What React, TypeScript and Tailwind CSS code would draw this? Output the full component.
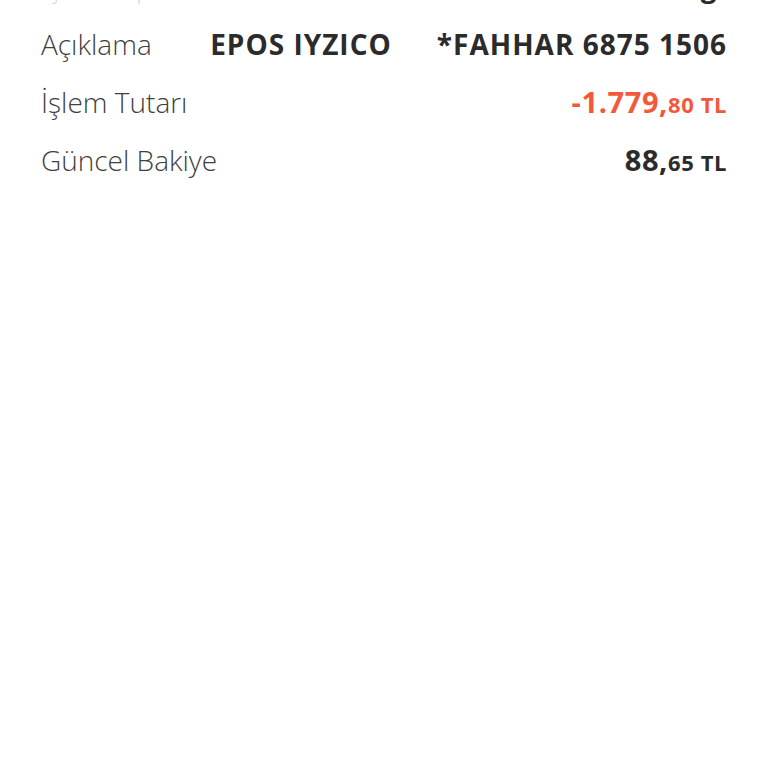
import React from 'react';

const rows = [
    { label: 'İşlem Tipi', value: 'Vergi' },
];

const Amount = ({ main, cents, className }: { main: string; cents: string; className: string }) => (
    <span className={`font-bold tracking-[0.6px] ${className}`}>
        <span className="text-[29px]">{main}</span>
        <span className="text-[22px]">{cents} TL</span>
    </span>
);

export default function App() {
    return (
        <div className="min-h-[768px] bg-white overflow-hidden font-['Open_Sans',sans-serif]">
            <div className="px-[41px] -mt-[43px]">
                {rows.map((r) => (
                    <div key={r.label} className="flex items-baseline justify-between h-[58px] leading-[58px]">
                        <span className="text-[28px] font-light text-[#d8d8d8]">{r.label}</span>
                        <span className="text-[28px] font-bold tracking-[1px] text-[#2b2b2b]">{r.value}</span>
                    </div>
                ))}

                {/* Açıklama */}
                <div className="flex items-baseline justify-between h-[58px] leading-[58px]">
                    <span className="text-[28px] font-light text-[#3f3f3f]">Açıklama</span>
                    <span className="flex gap-[45px] text-[28px] font-bold tracking-[1px] text-[#2b2b2b]">
                        <span>EPOS IYZICO</span>
                        <span>*FAHHAR 6875 1506</span>
                    </span>
                </div>

                {/* İşlem Tutarı */}
                <div className="flex items-baseline justify-between h-[58px] leading-[58px]">
                    <span className="text-[28px] font-light text-[#3f3f3f]">İşlem Tutarı</span>
                    <Amount main="-1.779," cents="80" className="text-[#f4583a]" />
                </div>

                {/* Güncel Bakiye */}
                <div className="flex items-baseline justify-between h-[58px] leading-[58px]">
                    <span className="text-[28px] font-light text-[#3f3f3f]">Güncel Bakiye</span>
                    <Amount main="88," cents="65" className="text-[#2b2b2b]" />
                </div>
            </div>
        </div>
    );
}
